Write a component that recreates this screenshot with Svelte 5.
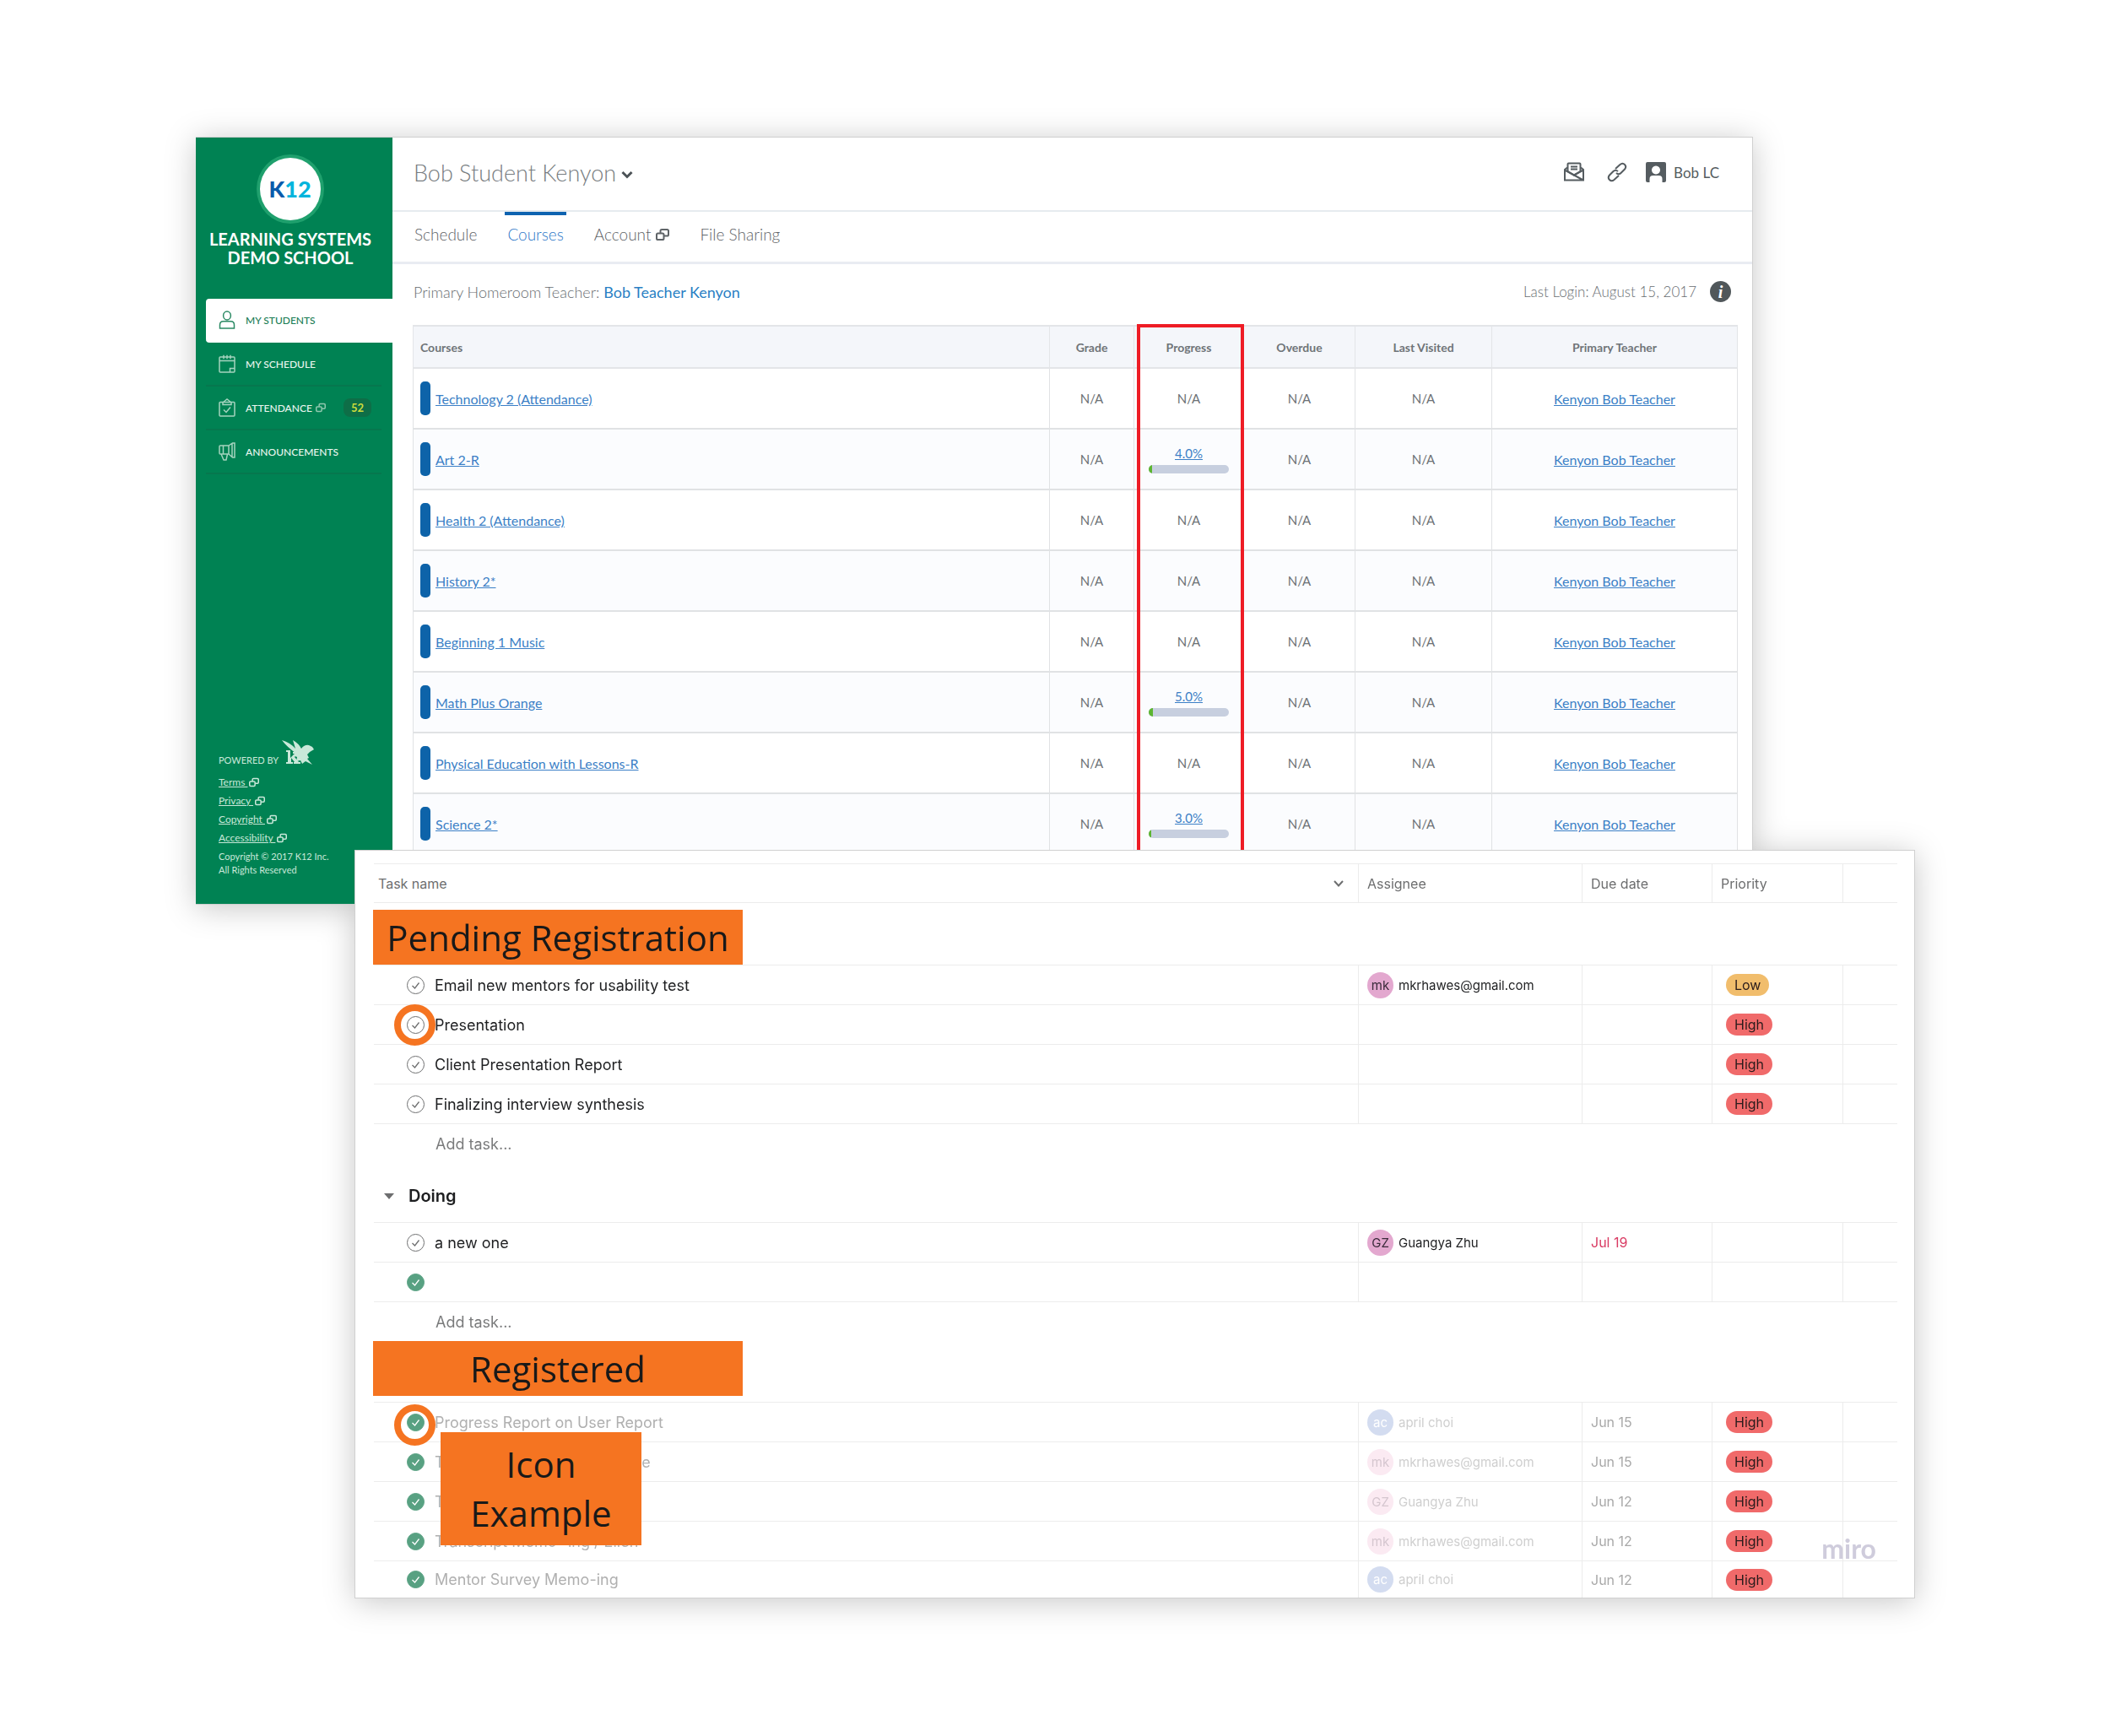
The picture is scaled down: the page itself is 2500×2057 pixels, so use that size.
<script>
  const menu = [
    { label: 'MY STUDENTS', icon: 'person', active: true },
    { label: 'MY SCHEDULE', icon: 'calendar' },
    { label: 'ATTENDANCE', icon: 'clipboard', external: true, badge: 52 },
    { label: 'ANNOUNCEMENTS', icon: 'horn' }
  ];
  const legal = ['Terms', 'Privacy', 'Copyright', 'Accessibility'];
  const courses = [
    { name: 'Technology 2 (Attendance)' },
    { name: 'Art 2-R', progress: 4 },
    { name: 'Health 2 (Attendance)' },
    { name: 'History 2*' },
    { name: 'Beginning 1 Music' },
    { name: 'Math Plus Orange', progress: 5 },
    { name: 'Physical Education with Lessons-R' },
    { name: 'Science 2*', progress: 3 }
  ];
  const people = {
    mk: { initials: 'mk', name: 'mkrhawes@gmail.com', tone: 'pink' },
    gz: { initials: 'GZ', name: 'Guangya Zhu', tone: 'pink' },
    ac: { initials: 'ac', name: 'april choi', tone: 'blue' }
  };
  const groups = [
    {
      key: 'pending',
      banner: 'Pending Registration',
      add: true,
      tasks: [
        { name: 'Email new mentors for usability test', who: people.mk, priority: 'Low' },
        { name: 'Presentation', priority: 'High', ring: true },
        { name: 'Client Presentation Report', priority: 'High' },
        { name: 'Finalizing interview synthesis', priority: 'High' }
      ]
    },
    {
      key: 'doing',
      title: 'Doing',
      add: true,
      tasks: [
        { name: 'a new one', who: people.gz, due: 'Jul 19', late: true },
        { name: '', done: true }
      ]
    },
    {
      key: 'registered',
      banner: 'Registered',
      tasks: [
        { name: 'Progress Report on User Report', who: people.ac, due: 'Jun 15', priority: 'High', done: true, ring: true, note: true },
        { name: 'Transcript Memo-ing example', who: people.mk, due: 'Jun 15', priority: 'High', done: true },
        { name: 'Transcript Memo-ing', who: people.gz, due: 'Jun 12', priority: 'High', done: true },
        { name: 'Transcript Memo -ing / Ellen', who: people.mk, due: 'Jun 12', priority: 'High', done: true },
        { name: 'Mentor Survey Memo-ing', who: people.ac, due: 'Jun 12', priority: 'High', done: true }
      ]
    }
  ];
</script>

{#snippet external()}
  <svg class="external" viewBox="0 0 16 16" aria-hidden="true">
    <rect x="1" y="6.5" width="8.5" height="7.5" rx="1.6" />
    <path d="M5.5 6.2V3.6Q5.5 2 7.1 2h6.3Q15 2 15 3.6v4.3q0 1.6-1.6 1.6H9.8" />
  </svg>
{/snippet}

{#snippet menuIcon(name)}
  <svg class="menu-icon" viewBox="0 0 20 22" aria-hidden="true">
    {#if name === 'person'}
      <ellipse cx="10" cy="6" rx="4.4" ry="5" />
      <path d="M1.5 21v-4q0-4.2 4.2-4.2h8.6q4.2 0 4.2 4.2v4z" />
    {:else if name === 'calendar'}
      <rect x="1" y="3" width="18" height="18" rx="1" />
      <path d="M1 7.5h18M6 .8v4.5M10 .8v4.500M14 .8v4.5M13.500 21v-4.500h5.500" />
    {:else if name === 'clipboard'}
      <rect x="1" y="4.5" width="18" height="16.5" rx="1" />
      <path d="M5 7.5V5L10 1l5 4v2.500zM6 13.500l3 3 5-6" />
    {:else}
      <path d="M12 4H2q-1 0-1 1v8q0 1 1 1h10zM12 4l4.500-3H19v17h-2.500L12 14M16 1.500v16M5.500 4v10M3 14l3 7h3l1.500-7" />
    {/if}
  </svg>
{/snippet}

<main>
  <section class="panel portal">
    <aside>
      <div class="logo"><span>K</span>12</div>
      <h1>LEARNING SYSTEMS DEMO SCHOOL</h1>
      <nav class="menu">
        {#each menu as item}
          <a href="#menu" class:active={item.active}>
            {@render menuIcon(item.icon)}
            <span>{item.label}</span>
            {#if item.external}{@render external()}{/if}
            {#if item.badge}<b>{item.badge}</b>{/if}
          </a>
        {/each}
      </nav>
      <footer>
        <div class="powered">
          POWERED BY
          <svg viewBox="0 0 38 30" aria-hidden="true">
            <path d="M5 12h5v9l5-5h-2v-2h8v2h-2l-4 4 5 6h2v2H14v-2h1l-4-5v5h2v2H5v-2h2V14H5z" />
            <path d="M0 0q10 3 16 10L13 0q7 4 10 10 4-5 9-4l4 2 2 3-5 3-3 3 2 4-2 1 6 7-8-4-4 3-2-4-5 1 1-5-5-2 4-2Q5 7 0 0z" />
          </svg>
        </div>
        {#each legal as item}
          <a href="#legal"><span>{item}&nbsp;</span>{@render external()}</a>
        {/each}
        <p>Copyright © 2017 K12 Inc.<br />All Rights Reserved</p>
      </footer>
    </aside>

    <div class="content">
      <header>
        <button class="student">
          Bob Student Kenyon
          <svg viewBox="0 0 14 10" aria-hidden="true"><path d="M1.5 2L7 7.5 12.5 2" /></svg>
        </button>
        <div class="tools">
          <button aria-label="Mail">
            <svg viewBox="0 0 26 24" aria-hidden="true">
              <path d="M5 6.500L2 9v12.500h22V9l-3-2.500M2 9.500l22 12M24 9.500L12 16" />
              <path d="M5.500 11V2.500Q5.500 1.500 6.500 1.500h13q1 0 1 1V11l-7.500 4.500zM9 5.500h8M9 8.500h8" />
            </svg>
          </button>
          <button aria-label="Links">
            <svg viewBox="0 0 26 24" aria-hidden="true">
              <path d="M11 8l5.500-5q3-2.500 5.500 0t0 5.500l-4.500 4.500q-2.500 2.500-5.500 0M15 16l-5.500 5q-3 2.500-5.500 0t0-5.500L8.500 11q2.500-2.500 5.500 0" />
            </svg>
          </button>
          <button class="account">
            <svg viewBox="0 0 24 24" aria-hidden="true">
              <path class="solid" fill-rule="evenodd" d="M2 0h20q2 0 2 2v20q0 2-2 2h-2.500v-4q0-4-4-4h-7q-4 0-4 4v4H2q-2 0-2-2V2Q0 0 2 0zM12 4.500a5 5 0 1 0 .01 0z" />
            </svg>
            Bob LC
          </button>
        </div>
      </header>
      <nav class="tabs">
        <a href="#schedule">Schedule</a>
        <a href="#courses" class="current">Courses</a>
        <a href="#account">Account {@render external()}</a>
        <a href="#files">File Sharing</a>
      </nav>
      <div class="info">
        <span>Primary Homeroom Teacher: <a href="#teacher">Bob Teacher Kenyon</a></span>
        <span class="login">Last Login: August 15, 2017 <button aria-label="Information">i</button></span>
      </div>
      <div class="courses">
        <table>
          <colgroup>
            <col /><col class="w-grade" /><col class="w-progress" /><col class="w-overdue" /><col class="w-visited" /><col class="w-teacher" />
          </colgroup>
          <thead>
            <tr>
              <th>Courses</th><th>Grade</th><th>Progress</th><th>Overdue</th><th>Last Visited</th><th>Primary Teacher</th>
            </tr>
          </thead>
          <tbody>
            {#each courses as course}
              <tr>
                <td><div class="course"><i></i><a href="#course">{course.name}</a></div></td>
                <td>N/A</td>
                <td>
                  {#if course.progress}
                    <a class="percent" href="#progress">{course.progress.toFixed(1)}%</a>
                    <div class="bar"><div style:width="{course.progress}%"></div></div>
                  {:else}N/A{/if}
                </td>
                <td>N/A</td>
                <td>N/A</td>
                <td><a href="#teacher">Kenyon Bob Teacher</a></td>
              </tr>
            {/each}
          </tbody>
        </table>
        <div class="highlight"></div>
      </div>
    </div>
  </section>

  <section class="panel board">
    <table>
      <colgroup>
        <col /><col class="w-who" /><col class="w-due" /><col class="w-priority" /><col class="w-end" />
      </colgroup>
      <thead>
        <tr>
          <th>
            <div class="name-head">
              Task name
              <svg viewBox="0 0 12 10" aria-hidden="true"><path d="M1 2l5 5.5L11 2" /></svg>
            </div>
          </th>
          <th>Assignee</th><th>Due date</th><th>Priority</th><th></th>
        </tr>
      </thead>
      {#each groups as group}
        <tbody class={group.key}>
          <tr class="group">
            <td colspan="5">
              {#if group.banner}
                <div class="banner">{group.banner}</div>
              {:else}
                <button class="group-title">
                  <svg viewBox="0 0 12 7" aria-hidden="true"><path d="M0 0h12L6 7z" /></svg>
                  {group.title}
                </button>
              {/if}
            </td>
          </tr>
          {#each group.tasks as task}
            <tr class="task" class:faded={task.done}>
              <td class="name">
                <label>
                  <span class="tick">
                    <input type="checkbox" checked={task.done} aria-label={task.name || 'Untitled task'} />
                    <svg viewBox="0 0 21 21" aria-hidden="true"><path d="M6.5 11l3 3 5-6.5" /></svg>
                  </span>
                  {task.name}
                </label>
                {#if task.ring}<div class="ring"></div>{/if}
                {#if task.note}<div class="note">Icon Example</div>{/if}
              </td>
              <td>
                {#if task.who}
                  <div class="who"><span class="avatar {task.who.tone}">{task.who.initials}</span>{task.who.name}</div>
                {/if}
              </td>
              <td class="due" class:late={task.late}>{task.due ?? ''}</td>
              <td>{#if task.priority}<span class="pill {task.priority.toLowerCase()}">{task.priority}</span>{/if}</td>
              <td></td>
            </tr>
          {/each}
          {#if group.add}
            <tr class="add"><td colspan="5"><button>Add task...</button></td></tr>
          {/if}
        </tbody>
      {/each}
    </table>
    <div class="miro">miro</div>
  </section>
</main>

<style>
  :global(body) { background: #fff; }
  * { box-sizing: border-box; }
  main {
    padding: 162px 231px 165px 232px;
    filter: drop-shadow(0 4px 18px rgba(0, 0, 0, 0.22));
  }
  button { padding: 0; border: 0; background: none; font: inherit; color: inherit; }
  a { color: inherit; text-decoration: none; }
  svg { display: block; flex: none; fill: none; stroke: currentColor; stroke-width: 2; }
  table { width: 100%; table-layout: fixed; border-collapse: separate; border-spacing: 0; }
  th, td { padding: 0; }

  .panel { background: #fff; border: 1px solid #d0d0d0; }
  .portal {
    display: flex;
    margin-right: 192px;
    border-left: 0;
    font-family: Lato, 'Liberation Sans', sans-serif;
    color: #777c80;
  }
  aside {
    width: 233px;
    flex: none;
    display: flex;
    flex-direction: column;
    padding: 20px 0 32px 12px;
    background: #008253;
    color: #fff;
  }
  .logo {
    align-self: center;
    display: grid;
    grid-auto-flow: column;
    place-content: center;
    width: 80px;
    height: 82px;
    margin-right: 22px;
    border: 4px solid #1fa06d;
    border-radius: 50%;
    background: #fff;
    color: #00b4dc;
    font-weight: 900;
    font-size: 27px;
    line-height: 74px;
  }
  .logo span { color: #0a5bab; }
  h1 {
    width: 200px;
    margin: 7px 0 0;
    font-size: 20px;
    line-height: 22px;
    font-weight: 700;
    text-align: center;
  }
  .menu { margin-top: 38px; }
  .menu a {
    display: flex;
    align-items: center;
    height: 52px;
    margin-right: 13px;
    padding: 0 12px 0 15px;
    border-bottom: 2px solid #06774e;
    font-size: 12px;
    font-weight: 500;
    color: #e9f6ef;
  }
  .menu a.active {
    margin-right: 0;
    border-color: #fff;
    border-radius: 4px 0 0 4px;
    background: #fff;
    color: #1c7d56;
  }
  .menu-icon { width: 20px; height: 22px; margin-right: 12px; color: #a5d3bf; stroke-width: 1.5; }
  .active .menu-icon { color: #2b8a64; }
  .external { width: 16px; height: 16px; }
  .menu .external { width: 12px; height: 12px; margin-left: 4px; color: #8fc7ae; }
  .menu b {
    margin-left: auto;
    width: 33px;
    border-radius: 8px;
    background: #0e6e47;
    color: #cbdc3c;
    font-size: 13px;
    line-height: 22px;
    text-align: center;
  }
  footer {
    display: flex;
    flex-direction: column;
    align-items: flex-start;
    margin-top: auto;
    padding-left: 15px;
    font-size: 12px;
    color: #c9e8d9;
  }
  .powered { display: flex; align-items: flex-end; gap: 4px; margin-bottom: 9px; font-size: 11px; line-height: 12px; }
  .powered svg { width: 38px; height: 30px; fill: #c9e8d9; stroke: none; }
  footer a { display: flex; align-items: center; gap: 2px; line-height: 22px; }
  footer a span { text-decoration: underline; }
  footer .external { width: 12px; height: 12px; }
  footer p { margin: 3px 0 0; font-size: 11px; line-height: 16px; }

  .content { flex: 1; min-width: 0; padding-bottom: 58px; }
  header {
    display: flex;
    justify-content: space-between;
    align-items: center;
    height: 88px;
    padding: 0 39px 4px 25px;
    border-bottom: 2px solid #e6ebef;
  }
  .student { display: flex; align-items: center; gap: 6px; font-size: 27px; font-weight: 300; }
  .student svg { width: 14px; height: 10px; color: #4c5357; stroke-width: 3; margin-top: 6px; }
  .tools { display: flex; align-items: center; gap: 25px; color: #555c60; }
  .tools svg { width: 26px; height: 24px; }
  .tools .account { display: flex; align-items: center; gap: 9px; margin-left: -4px; font-size: 17px; }
  .tools .account svg { width: 24px; height: 24px; fill: currentColor; stroke: none; }
  .tabs {
    display: flex;
    gap: 30px;
    height: 62px;
    padding-left: 23px;
    border-bottom: 3px solid #e9ecf2;
    font-size: 19px;
    line-height: 24px;
    font-weight: 300;
    color: #5f6468;
  }
  .tabs a { display: flex; align-items: center; gap: 6px; padding: 0 3px 9px; border-top: 4px solid transparent; }
  .tabs a.current { border-color: #0d63b0; color: #2f78c8; }
  .info {
    display: flex;
    justify-content: space-between;
    align-items: center;
    height: 72px;
    padding: 0 25px 7px;
    font-size: 18px;
    font-weight: 300;
    color: #686d71;
  }
  .info a { color: #2a7fc4; font-weight: 400; }
  .login { display: flex; align-items: center; gap: 16px; font-size: 17px; }
  .login button {
    width: 25px;
    height: 25px;
    border-radius: 50%;
    background: #50575a;
    color: #fff;
    font: italic 900 20px/24px 'Liberation Serif', serif;
  }
  .courses { position: relative; margin: 0 17px 0 24px; }
  .w-grade { width: 100px; }
  .w-progress { width: 130px; }
  .w-overdue { width: 132px; }
  .w-visited { width: 162px; }
  .w-teacher { width: 292px; }
  .courses th {
    height: 52px;
    border: 0 solid #e3e5e8;
    border-width: 2px 0 2px 1px;
    background: #f4f6fa;
    font-size: 14px;
    color: #6f7478;
  }
  .courses th:first-child { padding-left: 8px; text-align: left; }
  .courses td {
    height: 72px;
    border: 0 solid #e0e2e4;
    border-width: 0 0 2px 1px;
    text-align: center;
    font-size: 15px;
    color: #6c7175;
  }
  .courses th:last-child, .courses td:last-child { border-right-width: 1px; }
  .courses tr:nth-child(even) td { background: #fbfcfe; }
  .courses a { font-size: 16px; color: #3b7fc6; text-decoration: underline; }
  .courses a.percent { font-size: 15px; }
  .course { display: flex; align-items: center; gap: 6px; padding-left: 8px; }
  .course i { width: 12px; height: 40px; border-radius: 5px; background: #0d63a9; }
  .bar { width: 95px; height: 10px; margin: 5px auto 0; border-radius: 5px; overflow: hidden; background: #c7cfdf; }
  .bar div { height: 100%; background: #5cb531; }
  .highlight { position: absolute; top: -1px; right: 585px; bottom: 0; width: 127px; border: 4px solid #ee1c25; }

  .board {
    position: relative;
    margin: -65px 0 0 188px;
    padding: 15px 20px 0 22px;
    font-family: Inter, 'Liberation Sans', sans-serif;
    font-size: 16px;
    color: #1e1f21;
  }
  .w-who { width: 265px; }
  .w-due { width: 154px; }
  .w-priority { width: 155px; }
  .w-end { width: 65px; }
  .board th {
    height: 47px;
    padding-left: 10px;
    border: 0 solid #ececec;
    border-width: 1px 0 1px 1px;
    font-weight: 400;
    text-align: left;
    color: #6d6e6f;
  }
  .board th:first-child { padding-left: 5px; border-left: 0; }
  .name-head { display: flex; justify-content: space-between; align-items: center; padding-right: 17px; }
  .name-head svg { width: 12px; height: 10px; }
  .group td { height: 73px; border-bottom: 1px solid #ececec; vertical-align: top; }
  .pending .group td { padding-top: 8px; }
  .doing .group td { height: 71px; }
  .banner {
    width: 438px;
    margin-left: -1px;
    background: #f57421;
    color: #191919;
    font: 42px/65px 'Open Sans', sans-serif;
    text-align: center;
  }
  .group-title { display: flex; align-items: center; gap: 17px; padding: 27px 0 0 12px; font-size: 20px; line-height: 24px; font-weight: 600; }
  .group-title svg { width: 12px; height: 7px; fill: #6d6e6f; stroke: none; }
  .task td {
    height: 47px;
    padding-left: 10px;
    border: 0 solid #ececec;
    border-width: 0 0 1px 1px;
  }
  .task td.name { position: relative; padding-left: 39px; border-left: 0; font-size: 18px; }
  .name label { display: flex; align-items: center; gap: 12px; }
  .tick { display: grid; }
  .tick input {
    grid-area: 1 / 1;
    appearance: none;
    width: 21px;
    height: 21px;
    margin: 0;
    border: 1px solid #6d6e6f;
    border-radius: 50%;
  }
  .tick input:checked { border-color: #58a182; background: #58a182; }
  .tick svg { grid-area: 1 / 1; width: 21px; height: 21px; color: #6d6e6f; stroke-width: 1.3; pointer-events: none; }
  .faded .tick svg { color: #fff; }
  .faded { color: #b0b0b0; }
  .who { display: flex; align-items: center; gap: 6px; font-size: 15px; }
  .faded .who { color: #cfcfcf; }
  .avatar { width: 31px; border-radius: 50%; line-height: 31px; text-align: center; color: #3a2a3a; }
  .avatar.pink { background: #e3a8cf; }
  .faded .avatar.pink { background: #fbeaf2; color: #d5c6cf; }
  .avatar.blue { background: #d3dcf0; color: #fff; }
  .faded .due { color: #a9a9a9; }
  .due.late { color: #d93a62; }
  .pill {
    display: inline-block;
    margin-left: 6px;
    padding: 0 10px;
    border-radius: 13px;
    line-height: 26px;
    color: #2b1c1c;
  }
  .low { background: #f1bd6c; }
  .high { background: #f06a6a; }
  .add td { height: 46px; padding-left: 73px; font-size: 18px; color: #7a7b7c; }
  .registered tr:last-child td { height: 43px; border-bottom: 0; }
  .ring {
    position: absolute;
    top: -1px;
    left: 24px;
    width: 49px;
    height: 49px;
    border: 8px solid #f57421;
    border-radius: 50%;
    pointer-events: none;
  }
  .registered .ring { top: 2px; }
  .note {
    position: absolute;
    z-index: 1;
    top: 35px;
    left: 79px;
    width: 238px;
    padding: 9px 30px;
    background: #f57421;
    color: #191919;
    font: 42px/58px 'Open Sans', sans-serif;
    text-align: center;
  }
  .miro {
    position: absolute;
    right: 45px;
    bottom: 38px;
    font: 700 32px/40px Lato, sans-serif;
    color: #cfccdc;
  }
</style>
